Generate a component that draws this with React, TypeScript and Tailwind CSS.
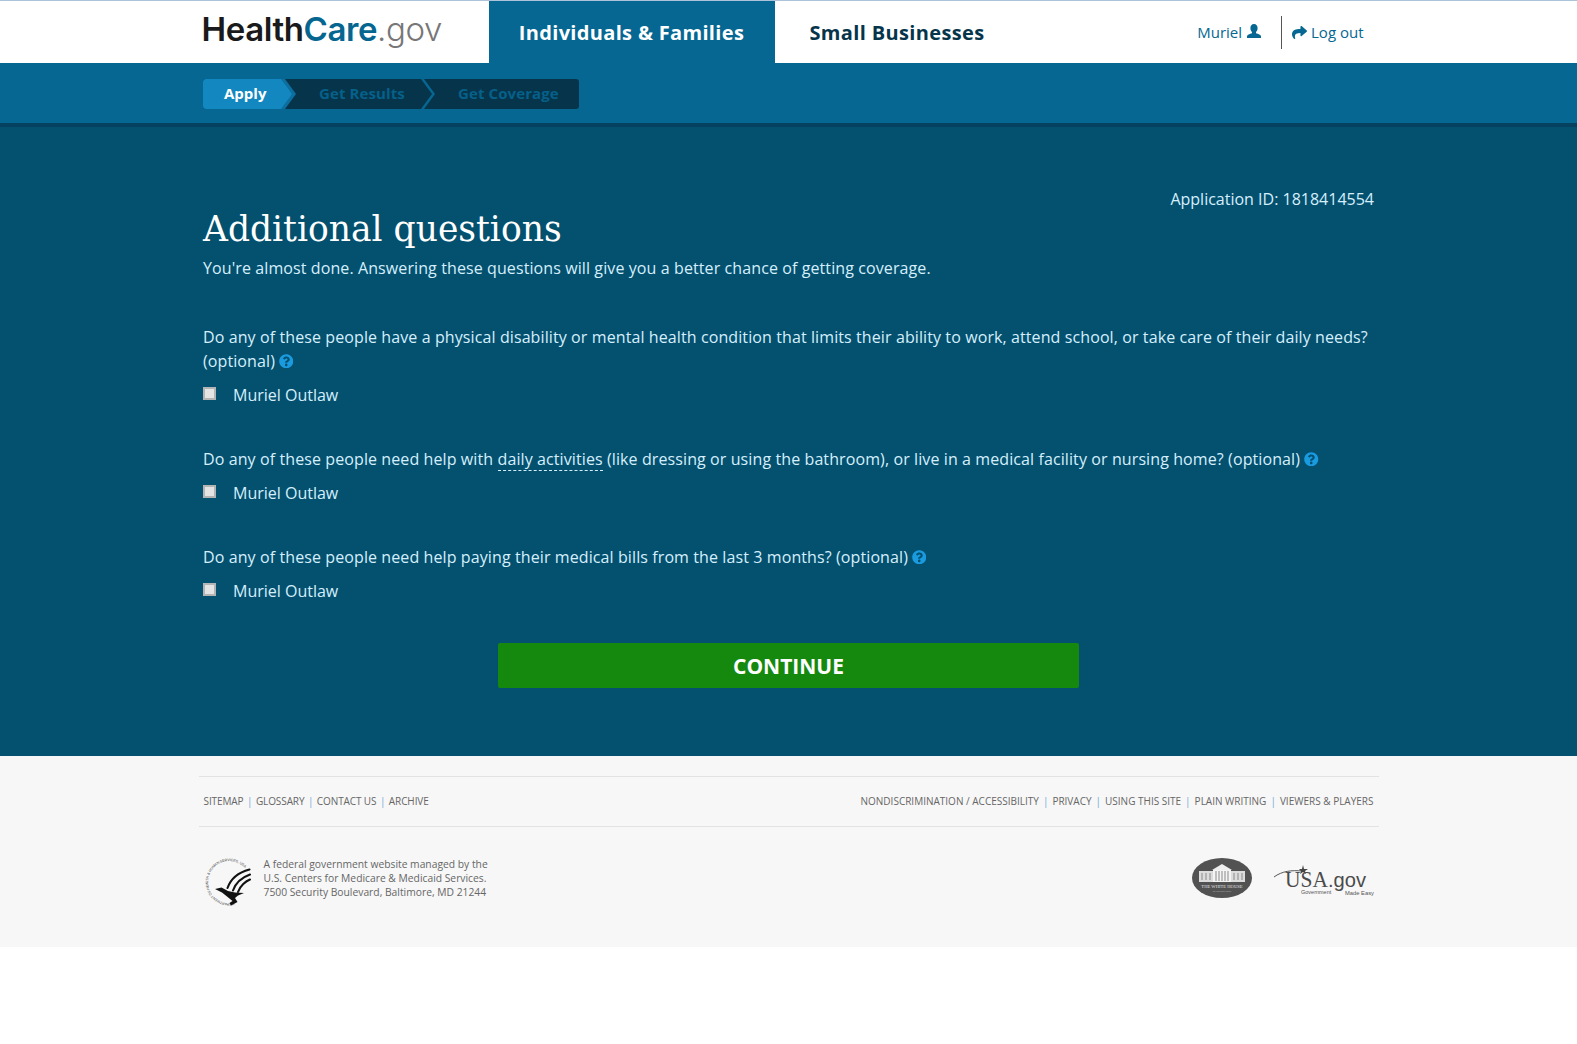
import React from "react";
import { FaShare, FaQuestionCircle } from "react-icons/fa";

const Help = () => (
  <FaQuestionCircle className="inline-block text-[#1a9be0] text-[14.5px] ml-[4px] align-[-1px]" />
);

const Person = () => (
  <label className="flex items-center h-[24px] mt-[10px]">
    <input type="checkbox" className="appearance-none w-[13px] h-[13px] border-2 border-[#b4b4b4] bg-[#e4e4e4] -mt-[3px] shrink-0" />
    <span className="ml-[17px] tracking-normal">Muriel Outlaw</span>
  </label>
);

const FooterLinks = ({ items, sepClass }: { items: string[]; sepClass: string }) => (
  <div className="flex items-center">
    {items.map((t, i) => (
      <React.Fragment key={t}>
        {i > 0 && <span className={sepClass}>|</span>}
        <span>{t}</span>
      </React.Fragment>
    ))}
  </div>
);

const Seal = () => (
  <svg width="50" height="50" viewBox="0 0 50 50" className="shrink-0">
    <path id="sealring" d="M30 45.500 A21 21 0 1 1 43 14" fill="none" />
    <text fontSize="3.6" fill="#444" fontFamily="Liberation Sans, sans-serif">
      <textPath href="#sealring" textLength="88" lengthAdjust="spacing">DEPARTMENT OF HEALTH &amp; HUMAN SERVICES, USA</textPath>
    </text>
    <g transform="translate(-2 0)">
      <g fill="none" stroke="#111" strokeWidth="2.1" strokeLinecap="round">
        <path d="M47.500 12.500 C38 15 29 21 25.500 31" />
        <path d="M48 17.500 C41 20 34 25 31 33.500" />
        <path d="M48 22.500 C44 24 38 29 36 35" />
      </g>
      <path d="M13 32 L19.500 30.500 L26 34 L33 35.500 L42 36 L36 38.500 L33 41 L35.500 45 L29 48.500 L27.500 46 L30.500 44 L25 39.500 L20 35.500Z" fill="#111" />
    </g>
  </svg>
);

const WhiteHouse = () => (
  <svg width="60" height="40" viewBox="0 0 60 40">
    <ellipse cx="30" cy="20" rx="30" ry="20" fill="#525252" />
    <rect x="7" y="13" width="46" height="11" fill="#dcdcdc" />
    <path d="M20 12 L30 6 L40 12Z" fill="#eee" />
    <rect x="21" y="12" width="18" height="12" fill="#f4f4f4" />
    <path d="M24 13v10M27 13v10M30 13v10M33 13v10M36 13v10M10 15v7M14 15v7M18 15v7M42 15v7M46 15v7M50 15v7" stroke="#8a8a8a" strokeWidth="1" />
    <text x="30" y="29.500" textAnchor="middle" fontSize="4.6" fill="#e2e2e2" fontFamily="Liberation Serif, serif">THE WHITE HOUSE</text>
    <text x="30" y="34" textAnchor="middle" fontSize="2.8" fill="#cfcfcf" fontFamily="Liberation Serif, serif">WASHINGTON</text>
  </svg>
);

const UsaGov = () => (
  <svg width="100" height="34" viewBox="0 0 100 34" className="mt-[6px]">
    <path d="M0 13 C8 7 18 6 28 7" stroke="#555" strokeWidth="1" fill="none" />
    <path d="M29 1 L30 5 L34 5 L31 7 L32 10 L29 8 L26 10 L27 7 L25 5 L28 5Z" fill="#444" />
    <text x="11" y="23" fontSize="23" textLength="43" lengthAdjust="spacingAndGlyphs" fill="#4b4b4b" fontFamily="Liberation Serif, serif">USA</text>
    <text x="54" y="23" fontSize="20" textLength="38" lengthAdjust="spacingAndGlyphs" fill="#4b4b4b" fontFamily="Liberation Sans, sans-serif">.gov</text>
    <text x="27" y="30" fontSize="5.500" fill="#555" fontFamily="Liberation Sans, sans-serif">Government</text>
    <text x="71" y="31" fontSize="5.800" fill="#555" fontFamily="Liberation Sans, sans-serif">Made Easy</text>
  </svg>
);

const UserIcon = () => (
  <svg width="16" height="16" viewBox="0 0 16 16" fill="currentColor" className="ml-[4px] -mt-[3px]">
    <path d="M8 1c2.300 0 3.600 1.700 3.600 4 0 1.700-.7 3.300-1.600 4.100v1.200c2.200.6 5 1.600 5 3.200V15H1v-1.500c0-1.600 2.800-2.600 5-3.200V9.100C5.100 8.300 4.400 6.700 4.400 5 4.400 2.700 5.700 1 8 1z" />
  </svg>
);

export default function App() {
  return (
    <div className="font-['Open_Sans',sans-serif] bg-white min-h-[1044px]">
      <header className="bg-white border-t border-[#adc3da] h-[63px]">
        <div className="w-[1180px] mx-auto flex items-stretch h-[62px] pl-[4px]">
          <div className="w-[286px] flex items-center -mt-[6px]">
            <span className="font-['Inter',sans-serif] text-[33px] tracking-[-0.4px] leading-none -ml-[1px]">
              <span className="font-semibold text-[#1a1a1a]">Health</span>
              <span className="font-semibold text-[#05668f]">Care</span>
              <span className="text-[#777] font-light">.gov</span>
            </span>
          </div>
          <div className="w-[286px] bg-[#056792] flex items-center justify-center text-white font-bold text-[20px] tracking-[0.33px] pt-[1px]">
            Individuals &amp; Families
          </div>
          <div className="ml-[35px] flex items-center text-[#06354b] font-bold text-[20px] tracking-[0.35px] pt-[1px]">
            Small Businesses
          </div>
          <div className="ml-auto flex items-center text-[#056792] text-[15px] pr-[15px]">
            <span className="ml-[1px]">Muriel</span>
            <UserIcon />
            <span className="w-px h-[33px] bg-[#555] ml-[19px] mr-[10px]" />
            <FaShare className="text-[15px] mr-[4px]" />
            <span>Log out</span>
          </div>
        </div>
      </header>

      <nav className="bg-[#056792] h-[60px]">
        <div className="w-[1180px] mx-auto pl-[4.5px] pt-[16px]">
          <div className="flex w-[376px] h-[30px] bg-[#06354b] rounded-[3px] font-bold text-[15px] leading-[29px] text-[#05608a] tracking-[0.1px] overflow-hidden">
            <span className="w-[78px] bg-[#1287c0] text-white pl-[21px] tracking-normal">Apply</span>
            <svg width="15" height="30" viewBox="0 0 15 30" className="shrink-0">
              <path d="M0 0 L4 0 L15 15 L4 30 L0 30Z" fill="#0c6f9f" />
              <path d="M0 0 L11 15 L0 30Z" fill="#1287c0" />
            </svg>
            <span className="w-[125px] pl-[23px] shrink-0">Get Results</span>
            <svg width="15" height="30" viewBox="0 0 15 30" className="shrink-0">
              <path d="M0 0 L3 0 L14 15 L3 30 L0 30 L11 15Z" fill="#056792" />
            </svg>
            <span className="flex-1 pl-[22px]">Get Coverage</span>
          </div>
        </div>
      </nav>

      <main className="bg-[#04506f] border-t-4 border-[#04425f] h-[633px] text-[#d5effc] text-[16px] leading-[24px]">
        <div className="w-[1180px] mx-auto px-[4.5px] pt-[60px]">
          <div className="text-right">Application ID: 1818414554</div>
          <h1 className="font-['DejaVu_Serif',serif] text-white text-[34.5px] leading-[44px] -mt-[4px]">Additional questions</h1>
          <div className="tracking-[0.1px]">
            <p className="mt-[5px]">You're almost done. Answering these questions will give you a better chance of getting coverage.</p>

            <div className="mt-[45px]">
              <div>
                Do any of these people have a physical disability or mental health condition that limits their ability to work, attend school, or take care of their daily needs? (optional)
                <Help />
              </div>
              <Person />
            </div>
            <div className="mt-[40px]">
              <div>
                Do any of these people need help with{" "}
                <span className="border-b border-dashed border-[#d5effc]">daily activities</span>{" "}
                (like dressing or using the bathroom), or live in a medical facility or nursing home? (optional)
                <Help />
              </div>
              <Person />
            </div>
            <div className="mt-[40px]">
              <div>
                Do any of these people need help paying their medical bills from the last 3 months? (optional)
                <Help />
              </div>
              <Person />
            </div>
          </div>
          <div className="flex justify-center mt-[40px]">
            <button className="w-[581px] h-[45px] bg-[#15880e] rounded-[2px] text-white font-bold text-[21px]">CONTINUE</button>
          </div>
        </div>
      </main>

      <footer className="bg-[#f7f7f7] h-[191px] pt-[20px]">
        <div className="w-[1180px] mx-auto text-[#666]">
          <div className="border-y border-[#e2e2e2] h-[51px] px-[5px] flex items-center justify-between text-[10px]">
            <div className="tracking-[-0.1px]">
              <FooterLinks sepClass="text-[#6fa8d6] mx-[3.5px]" items={["SITEMAP", "GLOSSARY", "CONTACT US", "ARCHIVE"]} />
            </div>
            <FooterLinks sepClass="text-[#6fa8d6] mx-[4px]" items={["NONDISCRIMINATION / ACCESSIBILITY", "PRIVACY", "USING THIS SITE", "PLAIN WRITING", "VIEWERS & PLAYERS"]} />
          </div>
          <div className="flex items-center justify-between px-[5px] mt-[30px]">
            <div className="flex items-center">
              <Seal />
              <div className="ml-[10px] text-[10.3px] leading-[14px] -mt-[8px]">
                A federal government website managed by the<br />
                U.S. Centers for Medicare &amp; Medicaid Services.<br />
                7500 Security Boulevard, Baltimore, MD 21244
              </div>
            </div>
            <div className="flex items-center gap-[22px] -mt-[9px]">
              <WhiteHouse />
              <UsaGov />
            </div>
          </div>
        </div>
      </footer>
    </div>
  );
}
